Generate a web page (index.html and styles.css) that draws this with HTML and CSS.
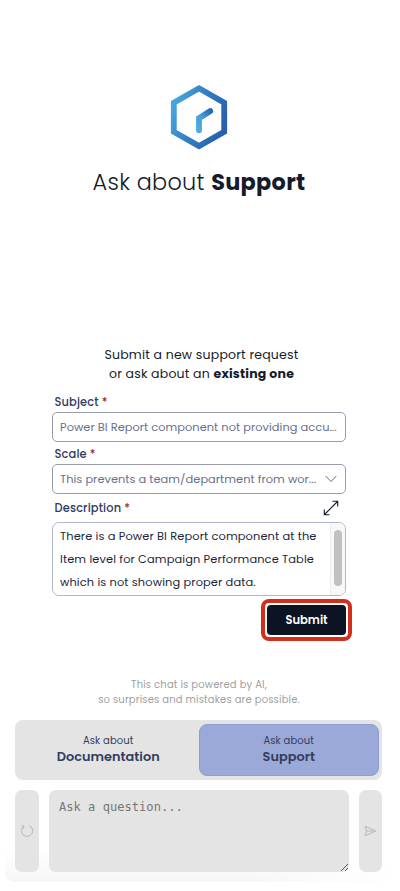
FILE: index.html
```html
<!DOCTYPE html>
<html lang="en">
<head>
<meta charset="utf-8">
<title>Ask about Support</title>
<link rel="stylesheet" href="styles.css">
</head>
<body>
<main class="panel">
  <header class="hero">
    <svg class="logo" width="58" height="66" viewBox="0 0 58 66">
      <defs>
        <linearGradient id="blue" x1="0" y1="0.2" x2="1" y2="0.65">
          <stop offset="0" stop-color="#48a7df"/><stop offset="0.45" stop-color="#3480c5"/><stop offset="1" stop-color="#2860ad"/>
        </linearGradient>
        <linearGradient id="hand" x1="0" y1="1" x2="1" y2="0">
          <stop offset="0" stop-color="#4cabe1"/><stop offset="0.45" stop-color="#459fd9"/><stop offset="1" stop-color="#286bb5"/>
        </linearGradient>
      </defs>
      <path d="M29 4.3 54.2 18.8V47.7L29 62.1 3.8 47.7V18.8Z" fill="none" stroke="url(#blue)" stroke-width="5.8"/>
      <path d="M29 46.3V34.2L40.3 27" fill="none" stroke="url(#hand)" stroke-width="5.8" stroke-linecap="round"/>
    </svg>
    <h1 class="title"><span class="title-light">Ask about</span> <b>Support</b></h1>
  </header>

  <form class="request">
    <p class="intro">Submit a new support request<br>or ask about an <b>existing one</b></p>
    <div class="label label-subject">Subject <i>*</i></div>
    <div class="field"><span class="subject-value">Power BI Report component not providing accu...</span></div>
    <div class="label label-scale">Scale <i>*</i></div>
    <div class="field"><span class="scale-value">This prevents a team/department from wor...</span>
      <svg class="chevron" width="12" height="8" viewBox="0 0 12 8"><path d="M.7 1 6 6.5 11.3 1"/></svg>
    </div>
    <div class="label label-description"><span>Description <i>*</i></span>
      <svg class="expand" width="16" height="16" viewBox="0 0 16 16"><path d="M1.5 14.5 14.5 1.5M9.5 1.3h5.2v5.2M1.3 9.5v5.2h5.2"/></svg>
    </div>
    <div class="description">
      <div class="description-text">There is a Power BI Report component at the<br>Item level for Campaign Performance Table<br>which is not showing proper data.</div>
      <div class="scroll"><div class="thumb"></div></div>
    </div>
    <div class="submit"><span>Submit</span></div>
  </form>

  <p class="notice">This chat is powered by AI,<br>so surprises and mistakes are possible.</p>

  <nav class="tabs">
    <div class="tab"><span class="tab-small">Ask about</span><b>Documentation</b></div>
    <div class="tab active"><span class="tab-small">Ask about</span><b>Support</b></div>
  </nav>

  <div class="composer">
    <div class="side"><svg width="14" height="14" viewBox="0 0 14 14"><path d="M9.2 1.6A5.6 5.6 0 1 1 3.6 2.4M1.3 1.5 3.9 2.1 3.5 4.7"/></svg></div>
    <div class="question"><span>Ask a question...</span>
      <svg class="grip" width="9" height="9" viewBox="0 0 9 9"><path d="M1 8 8 1M5 8 8 5"/></svg>
    </div>
    <div class="side send"><svg width="13" height="12" viewBox="0 0 13 12"><path d="M1.2 1.2 11.6 6 1.2 10.8 2.5 6ZM2.5 6h9"/></svg></div>
  </div>
</main>
</body>
</html>
```
FILE: styles.css
```css
* { box-sizing: border-box; }
body { margin: 0; background: #fff; font-family: Poppins, Inter, sans-serif; color: #151b2c; }
p, h1 { margin: 0; }
svg { display: block; fill: none; flex: none; }
span, b, .description-text { white-space: nowrap; }
.panel { width: 390px; height: 882px; margin-left: 5px; border-radius: 0 0 9px 9px; background: linear-gradient(90deg, transparent 60%, #fff), linear-gradient(#fff 850px, #f6f6f6); display: flex; flex-direction: column; }
.hero { height: 345px; padding: 84px 0 0; width: 388px; display: flex; flex-direction: column; align-items: center; }
.title { margin-top: 16px; font-size: 22.4px; letter-spacing: .28px; line-height: 32px; font-weight: 300; }
.title b { font-weight: 700; }
.request { width: 294px; margin-left: 47px; height: 332px; }
.intro { height: 46px; padding-left: 5px; font-size: 12.5px; letter-spacing: .2px; line-height: 19px; text-align: center; }
.intro b { font-weight: 700; letter-spacing: .2px; }
.label { font-size: 11.4px; letter-spacing: .15px; line-height: 14px; font-weight: 500; color: #303b60; padding-left: 2.5px; }
.label i { font-style: normal; color: #9c2f2f; }
.label-subject { padding-top: 4px; height: 21px; }
.field { height: 30px; border: 1px solid #9a9cad; border-radius: 5px; display: flex; align-items: center; padding: 0 8px 0 7px; font-size: 11.4px; color: #696f8a; justify-content: space-between; }
.subject-value, .scale-value { letter-spacing: .03px; }
.label-scale { height: 22px; padding-top: 5px; }
.chevron { stroke: #656c87; stroke-width: 1; }
.label-description { height: 28px; padding: 0 7px 0 2.5px; display: flex; align-items: center; justify-content: space-between; }
.expand { stroke: #151b2c; stroke-width: 1.1; }
.description { height: 74px; border: 1px solid #b0b7cd; border-radius: 7px; display: flex; justify-content: space-between; overflow: hidden; }
.description-text { padding: 2px 0 0 7px; font-size: 11.4px; letter-spacing: .12px; line-height: 22.8px; color: #20263a; }
.scroll { width: 15px; background: #f8f8f8; border-left: 1px solid #eee; padding: 7px 0 0 3px; }
.thumb { width: 8px; height: 56px; border-radius: 4px; background: #c1c1c1; }
.submit { width: 91px; height: 42px; margin: 3px 0 0 209px; border: 4px solid #d2301b; border-radius: 8px; padding: 2px; display: flex; }
.submit span { flex: 1; background: #0c1322; color: #fff; border-radius: 4px; font-size: 11.5px; font-weight: 600; display: flex; align-items: center; justify-content: center; }
.notice { height: 43px; width: 388px; font-size: 10px; letter-spacing: .17px; line-height: 15px; color: #a0a0a0; text-align: center; }
.tabs { height: 60px; margin: 0 13px 0 10px; border-radius: 8px; background: #e4e4e4; display: flex; padding: 4px 3px; }
.tab { flex: 1; display: flex; flex-direction: column; align-items: center; padding-top: 8px; border: 1px solid transparent; border-radius: 8px; color: #343c5d; }
.active { background: #9aa9d7; border-color: #8b9ed5; }
.tab-small { font-size: 10px; letter-spacing: .1px; line-height: 15px; }
.tab b { font-size: 12.9px; line-height: 18px; font-weight: 600; }
.composer { height: 82px; margin: 10px 13px 0 10px; display: flex; gap: 10px; }
.side { width: 24px; border-radius: 7px; background: #e4e4e4; display: flex; align-items: center; justify-content: center; }
.send { width: 23px; }
.side path { stroke: #b8b8b8; }
.question { position: relative; flex: 1; border-radius: 7px; background: #e4e4e4; padding: 9px 10px; font: 12.1px/16px "DejaVu Sans Mono", monospace; color: #777; }
.grip { position: absolute; right: 0; bottom: 0; stroke: #555; }
```
